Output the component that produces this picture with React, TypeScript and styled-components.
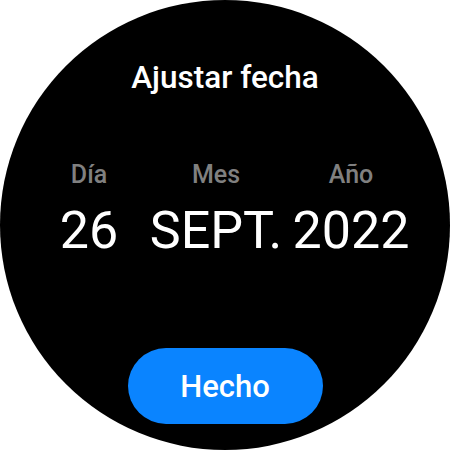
import { FC } from 'react'
import styled, { createGlobalStyle } from 'styled-components'

const GlobalStyle = createGlobalStyle`
  html, body {
    margin: 0;
    padding: 0;
    background: #ffffff;
  }
  body {
    font-family: Roboto, "Noto Sans", "Liberation Sans", sans-serif;
  }
`

const Face = styled.div`
  width: 450px;
  height: 450px;
  border-radius: 50%;
  background: #000000;
  display: flex;
  flex-direction: column;
  align-items: center;
  box-sizing: border-box;
  padding-top: 59px;
`

const Title = styled.h1`
  margin: 0;
  font-size: 31.5px;
  line-height: 38px;
  font-weight: 500;
  color: #ffffff;
`

const Picker = styled.div`
  display: grid;
  grid-template-columns: 118px 136px 134px;
  align-self: flex-start;
  margin-left: 30px;
  margin-top: 63px;
`

const Column = styled.div`
  display: flex;
  flex-direction: column;
  align-items: center;
`

const Label = styled.span`
  font-size: 25px;
  line-height: 30px;
  font-weight: 500;
  color: #808080;
`

const Value = styled.span`
  margin-top: 11px;
  font-size: 52px;
  line-height: 60px;
  font-weight: 400;
  color: #ffffff;
  white-space: nowrap;
`

const DoneButton = styled.button`
  margin-top: 87px;
  width: 195px;
  height: 76px;
  border: 0;
  border-radius: 38px;
  background: #0a84ff;
  color: #ffffff;
  font-family: inherit;
  font-size: 31px;
  font-weight: 500;
  cursor: pointer;
`

const fields = [
  { label: 'Día', value: '26' },
  { label: 'Mes', value: 'SEPT.' },
  { label: 'Año', value: '2022' },
]

const App: FC = () => {
  return (
    <>
      <GlobalStyle />
      <Face>
        <Title>Ajustar fecha</Title>
        <Picker>
          {fields.map((f) => (
            <Column key={f.label}>
              <Label>{f.label}</Label>
              <Value>{f.value}</Value>
            </Column>
          ))}
        </Picker>
        <DoneButton type="button">Hecho</DoneButton>
      </Face>
    </>
  )
}

export default App
